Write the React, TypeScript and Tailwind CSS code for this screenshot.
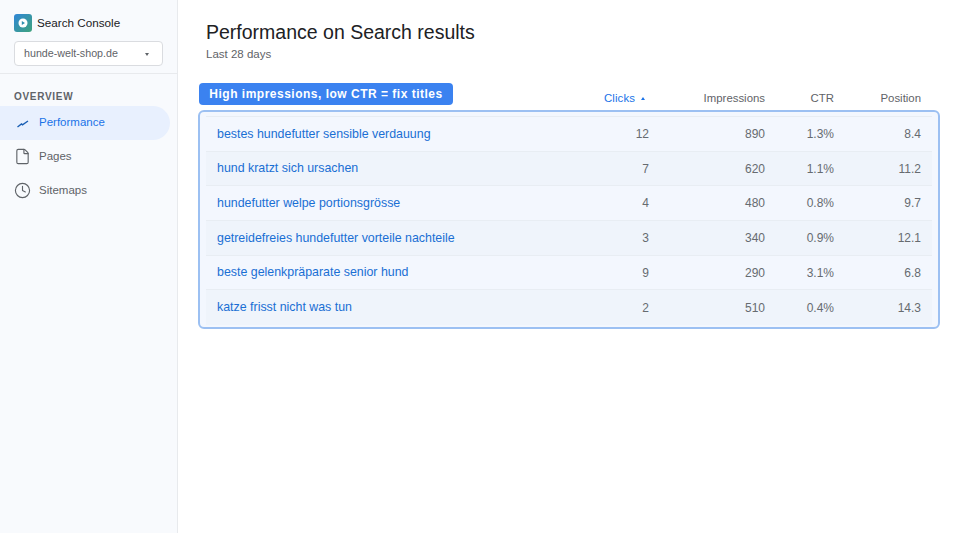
import { File, Clock } from "lucide-react";

const rows = [
  ["bestes hundefutter sensible verdauung", "12", "890", "1.3%", "8.4"],
  ["hund kratzt sich ursachen", "7", "620", "1.1%", "11.2"],
  ["hundefutter welpe portionsgrösse", "4", "480", "0.8%", "9.7"],
  ["getreidefreies hundefutter vorteile nachteile", "3", "340", "0.9%", "12.1"],
  ["beste gelenkpräparate senior hund", "9", "290", "3.1%", "6.8"],
  ["katze frisst nicht was tun", "2", "510", "0.4%", "14.3"],
];

function Logo() {
  return (
    <svg width="18" height="18" viewBox="0 0 18 18" className="shrink-0">
      <defs>
        <linearGradient id="lg" x1="0" y1="0" x2="1" y2="1">
          <stop offset="0" stopColor="#2f86d8" />
          <stop offset="1" stopColor="#3fa37c" />
        </linearGradient>
      </defs>
      <rect width="18" height="18" rx="3" fill="url(#lg)" />
      <circle cx="9" cy="9" r="4.5" fill="#fff" />
      <path d="M7.8 7 L11 9 L7.8 11 Z" fill="#2f8fb0" />
    </svg>
  );
}

export default function App() {
  return (
    <div className="flex h-[533px] w-[960px] overflow-hidden bg-white font-['Liberation_Sans',Arial,sans-serif]">
      <aside className="w-[178px] shrink-0 border-r border-[#e8eaed] bg-[#f8fafd]">
        <div className="border-b border-[#e8eaed] px-[14px] pt-[14px] pb-[7px]">
          <div className="flex h-[18px] items-center gap-[5px]">
            <Logo />
            <span className="text-[11.7px] text-[#202124]">Search Console</span>
          </div>
          <div className="mt-[9px] flex h-[25px] items-center justify-between rounded-[4px] border border-[#dadce0] bg-white pr-[13px] pl-[9px]">
            <span className="text-[10.7px] text-[#5f6368]">hunde-welt-shop.de</span>
            <span className="mt-[1px] border-x-[2.5px] border-t-[3px] border-x-transparent border-t-[#5f6368]" />
          </div>
        </div>
        <div className="pt-[17px] pl-[14px] text-[10px] leading-[12px] font-bold tracking-[0.7px] text-[#5f6368]">OVERVIEW</div>
        <nav className="mt-[3px] flex flex-col">
          <div className="flex h-[34px] w-[170px] items-center gap-[9px] rounded-r-[17px] bg-[#e8f0fe] pl-[16px]">
            <svg width="14" height="14" viewBox="0 0 14 14" className="shrink-0" fill="none">
              <path d="M1.5 11 L5.5 8 L6.5 8.8 L12 5" stroke="#1a5fb4" strokeWidth="1.4" />
            </svg>
            <span className="text-[11.5px] text-[#1a73e8]">Performance</span>
          </div>
          <div className="flex h-[33.5px] items-center gap-[8px] pl-[14px]">
            <File size={17} strokeWidth={1.6} className="shrink-0 text-[#5f6368]" />
            <span className="text-[11.5px] text-[#5f6368]">Pages</span>
          </div>
          <div className="flex h-[33.5px] items-center gap-[8px] pl-[14px]">
            <Clock size={17} strokeWidth={1.6} className="shrink-0 text-[#5f6368]" />
            <span className="text-[11.5px] text-[#5f6368]">Sitemaps</span>
          </div>
        </nav>
      </aside>
      <main className="min-w-0 flex-1 pt-[20px] pl-[20px]">
        <h1 className="pl-[8px] text-[19.5px] leading-[24px] font-normal text-[#202124]">Performance on Search results</h1>
        <p className="mt-[3px] pl-[8px] text-[11.5px] leading-[14px] text-[#5f6368]">Last 28 days</p>
        <div className="relative mt-[22px] flex h-[27px] w-[742px] items-start">
          <div className="ml-[1px] flex h-[22px] w-[254px] items-center justify-center rounded-[4px] bg-[#3b82f0] text-[12px] font-bold tracking-[0.5px] text-white">
            High impressions, low CTR = fix titles
          </div>
          <div className="absolute top-[7px] left-[8px] grid w-[726px] grid-cols-[1fr_116px_69px_87px] pr-[11px] text-[11.4px] leading-[16px] text-[#5f6368]">
            <div className="flex items-center justify-end gap-[6px] text-[#1a73e8]">
              <span className="tracking-[0.1px]">Clicks</span>
              <span className="mr-[4px] border-x-[2.5px] border-b-[3px] border-x-transparent border-b-[#1a73e8]" />
            </div>
            <div className="text-right">Impressions</div>
            <div className="text-right">CTR</div>
            <div className="text-right">Position</div>
          </div>
        </div>
        <div className="h-[219px] w-[742px] rounded-[6px] border-2 border-[#9cc0f2] bg-[#f3f7fe] pt-[4px] pl-[6px]">
          <div className="w-[726px] border-t border-[#e8edf3]">
            {rows.map((r, i) => (
              <div
                key={r[0]}
                className={`grid h-[34.7px] grid-cols-[1fr_60px_116px_69px_87px] items-center border-b border-[#e8edf3] px-[11px] text-[12px] text-[#666b70] ${i % 2 ? "bg-[#eff4fb]" : ""} ${i === 5 ? "border-b-0" : ""}`}
              >
                <span className="text-[12.4px] whitespace-nowrap text-[#1a6fd4]">{r[0]}</span>
                <span className="text-right">{r[1]}</span>
                <span className="text-right">{r[2]}</span>
                <span className="text-right">{r[3]}</span>
                <span className="text-right">{r[4]}</span>
              </div>
            ))}
          </div>
        </div>
      </main>
    </div>
  );
}
